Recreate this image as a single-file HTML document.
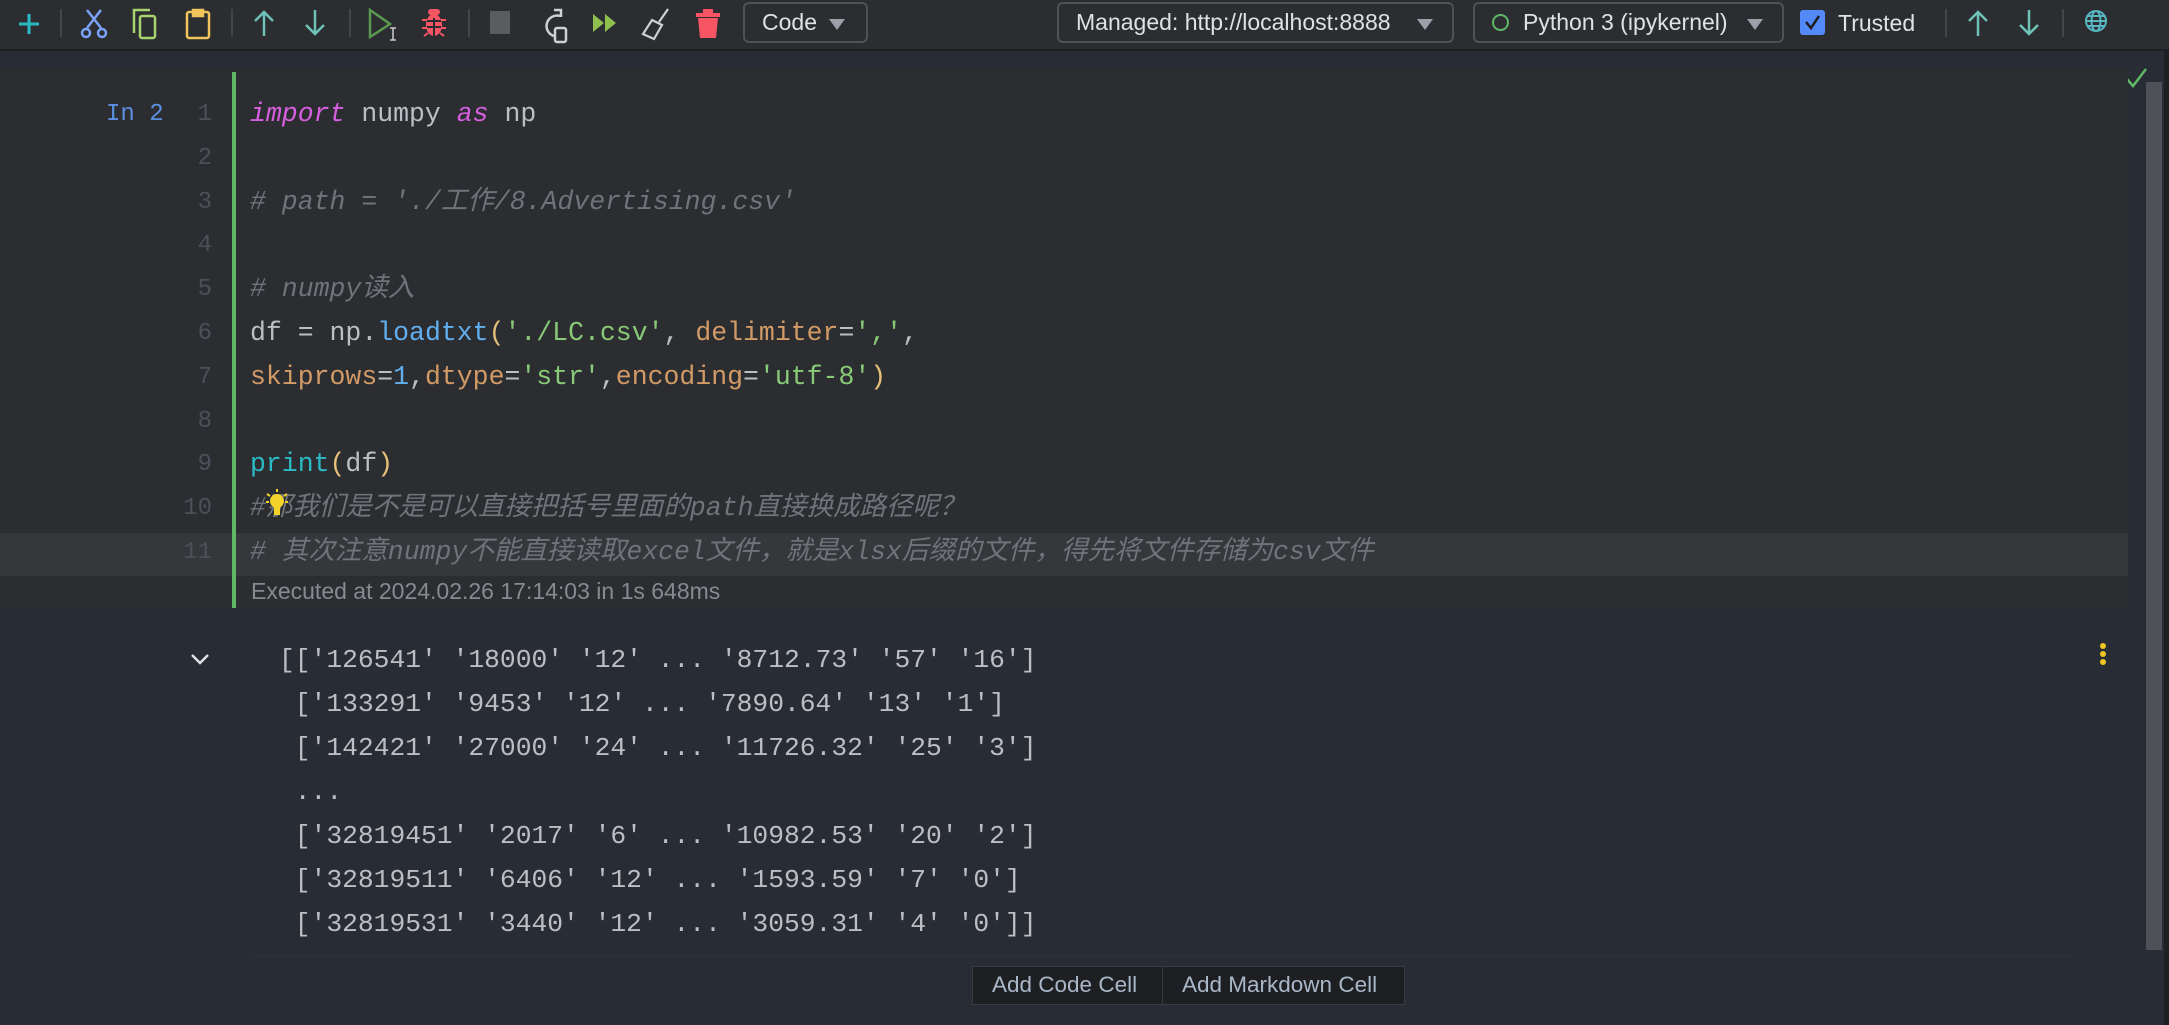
<!DOCTYPE html>
<html><head><meta charset="utf-8"><style>
*{margin:0;padding:0;box-sizing:border-box}
body{width:2169px;height:1025px;background:#282c34;overflow:hidden;position:relative;font-family:"Liberation Sans","Noto Sans CJK SC",sans-serif}
.abs{position:absolute}
#tb{left:0;top:0;width:2169px;height:51px;background:#2b2d30;border-bottom:2px solid #1e1f22}
.sep{position:absolute;top:9px;width:2px;height:28px;background:#43454a}
.ic{position:absolute;top:6px}
.dd{position:absolute;top:2px;height:41px;border:2px solid #4e5157;border-radius:6px;color:#dfe1e5;font-size:23px;line-height:37px;padding-left:17px}
.tri{position:absolute;top:15px;width:0;height:0;border-left:8px solid transparent;border-right:8px solid transparent;border-top:11px solid #9da0a8}
#cell{left:0;top:70px;width:2128px;height:538px;background:#2b2d30}
.code{position:absolute;left:250px;font-family:"Liberation Mono","Noto Sans CJK SC",monospace;font-size:26.5px;line-height:43.8px;color:#bcbec4;white-space:pre}
.ln{position:absolute;left:150px;width:62px;text-align:right;font-family:"Liberation Mono",monospace;font-size:24px;line-height:43.8px;color:#4b5059}
.k{color:#d55fde;font-style:italic}.c{color:#6f737a;font-style:italic}.f{color:#61afef}.s{color:#89ca78}.o{color:#d19a66}.p{color:#e5c07b}.pr{color:#2bbac5}
.out{position:absolute;left:279px;top:638px;font-family:"Liberation Mono",monospace;font-size:26.3px;line-height:44px;color:#bcbec4;white-space:pre}
</style></head><body>
<div id="tb" class="abs">
<svg class="ic" style="left:14px" width="30" height="34" viewBox="0 0 30 34"><path d="M15 8v20M5 18h20" stroke="#2bbac5" stroke-width="3"/></svg>
<div class="sep" style="left:60px"></div>
<svg class="ic" style="left:78px" width="32" height="34" viewBox="0 0 32 34"><g stroke="#7aa2f7" stroke-width="2.5" fill="none"><path d="M9 4l14 18M23 4L9 22"/><circle cx="8" cy="27" r="4"/><circle cx="24" cy="27" r="4"/></g></svg>
<svg class="ic" style="left:130px" width="32" height="34" viewBox="0 0 32 34"><g stroke="#a7d46f" stroke-width="2.5" fill="none"><path d="M4 27V4h16"/><rect x="10" y="10" width="15" height="22" rx="2"/></g></svg>
<svg class="ic" style="left:183px" width="32" height="34" viewBox="0 0 32 34"><g stroke="#f2c55c" stroke-width="2.5" fill="none"><rect x="4" y="6" width="22" height="26" rx="2"/><path d="M10 4h10v6H10z" fill="#f2c55c"/></g></svg>
<div class="sep" style="left:231px"></div>
<svg class="ic" style="left:249px" width="30" height="34" viewBox="0 0 30 34"><path d="M15 30V6M6 15l9-9 9 9" stroke="#6fc2b8" stroke-width="2.5" fill="none"/></svg>
<svg class="ic" style="left:300px" width="30" height="34" viewBox="0 0 30 34"><path d="M15 4v24M6 19l9 9 9-9" stroke="#6fc2b8" stroke-width="2.5" fill="none"/></svg>
<div class="sep" style="left:349px"></div>
<svg class="ic" style="left:366px" width="36" height="36" viewBox="0 0 36 36"><path d="M4 4l20 14L4 31z" stroke="#5a9a50" stroke-width="2.5" fill="none"/><path d="M24 22h6M27 22v12M24 34h6" stroke="#ccc" stroke-width="1.5"/></svg>
<svg class="ic" style="left:419px" width="30" height="34" viewBox="0 0 30 34"><g fill="#f75464"><ellipse cx="15" cy="19" rx="8" ry="11"/><rect x="9" y="3" width="12" height="6" rx="3"/></g><g stroke="#2b2d30" stroke-width="2"><path d="M8 15h14M8 21h14M15 12v18"/></g><path d="M3 14h5M22 14h5M3 22h5M22 22h5M5 30l4-3M25 30l-4-3" stroke="#f75464" stroke-width="2"/></svg>
<div class="sep" style="left:468px"></div>
<div class="abs" style="left:490px;top:11px;width:20px;height:23px;background:#5a5c60"></div>
<svg class="ic" style="left:538px" width="32" height="38" viewBox="0 0 32 38"><g stroke="#ced0d6" stroke-width="2.5" fill="none"><path d="M22 10a10 10 0 1 0-6 20"/><path d="M16 4h7v7"/><rect x="17" y="22" width="11" height="14" rx="2"/></g></svg>
<svg class="ic" style="left:590px" width="30" height="34" viewBox="0 0 30 34"><path d="M3 8l11 9-11 9zM15 8l11 9-11 9z" fill="#8fbf4f"/></svg>
<svg class="ic" style="left:640px" width="34" height="36" viewBox="0 0 34 36"><g stroke="#ced0d6" stroke-width="2.2" fill="none"><path d="M28 3L19 16"/><path d="M12 14l10 5-8 14-11-5z"/></g></svg>
<svg class="ic" style="left:694px" width="28" height="34" viewBox="0 0 28 34"><path d="M9 3h10v4h7v4H2V7h7z" fill="#f75464"/><path d="M4 12h20l-2 20H6z" fill="#f75464"/></svg>
<div class="dd" style="left:743px;width:125px">Code<div class="tri" style="left:84px"></div></div>
<div class="dd" style="left:1057px;width:397px">Managed: http://localhost:8888<div class="tri" style="left:358px"></div></div>
<div class="dd" style="left:1473px;width:311px;padding-left:48px"><div class="abs" style="left:17px;top:10px;width:17px;height:17px;border:2px solid #5fb865;border-radius:50%"></div>Python 3 (ipykernel)<div class="tri" style="left:272px"></div></div>
<div class="abs" style="left:1800px;top:10px;width:25px;height:25px;background:#548af7;border-radius:3px"></div>
<svg class="abs" style="left:1800px;top:10px" width="25" height="25"><path d="M6 12l5 6 8-12" stroke="#1e1f22" stroke-width="2.5" fill="none"/></svg>
<div class="abs" style="left:1838px;top:8px;font-size:23px;color:#dfe1e5;line-height:30px">Trusted</div>
<div class="sep" style="left:1945px"></div>
<svg class="ic" style="left:1963px" width="30" height="34" viewBox="0 0 30 34"><path d="M15 30V6M6 15l9-9 9 9" stroke="#6fc2b8" stroke-width="2.5" fill="none"/></svg>
<svg class="ic" style="left:2014px" width="30" height="34" viewBox="0 0 30 34"><path d="M15 4v24M6 19l9 9 9-9" stroke="#6fc2b8" stroke-width="2.5" fill="none"/></svg>
<div class="sep" style="left:2062px"></div>
<svg class="ic" style="left:2083px;top:8px" width="26" height="26" viewBox="0 0 26 26"><g stroke="#56b6c2" stroke-width="2" fill="none"><circle cx="13" cy="13" r="10"/><ellipse cx="13" cy="13" rx="4.5" ry="10"/><path d="M3 13h20M5 8h16M5 18h16"/></g></svg>
</div>
<svg class="abs" style="left:2124px;top:66px" width="26" height="24"><path d="M3 13l6 7L22 3" stroke="#5fb865" stroke-width="2.5" fill="none"/></svg>
<div id="cell" class="abs"></div>
<div class="abs" style="left:0;top:533px;width:2128px;height:43px;background:#35373b"></div>
<div class="abs" style="left:232px;top:72px;width:4px;height:536px;background:#5fb865"></div>
<div class="abs" style="left:106px;top:93px;font-family:'Liberation Mono',monospace;font-size:24px;line-height:43.8px;color:#5c8fe0">In 2</div>
<div class="ln" style="top:93px">1<br>2<br>3<br>4<br>5<br>6<br>7<br>8<br>9<br>10<br>11</div>
<div class="code" style="top:93px"><span class="k">import</span> numpy <span class="k">as</span> np

<span class="c"># path = './工作/8.Advertising.csv'</span>

<span class="c"># numpy读入</span>
df = np.<span class="f">loadtxt</span><span class="p">(</span><span class="s">'./LC.csv'</span>, <span class="o">delimiter</span>=<span class="s">','</span>,
<span class="o">skiprows</span>=<span class="f">1</span>,<span class="o">dtype</span>=<span class="s">'str'</span>,<span class="o">encoding</span>=<span class="s">'utf-8'</span><span class="p">)</span>

<span class="pr">print</span><span class="p">(</span>df<span class="p">)</span>
<span class="c">#那我们是不是可以直接把括号里面的path直接换成路径呢？</span>
<span class="c"># 其次注意numpy不能直接读取excel文件，就是xlsx后缀的文件，得先将文件存储为csv文件</span></div>
<svg class="abs" style="left:264px;top:487px" width="26" height="34" viewBox="0 0 26 34"><circle cx="13" cy="14" r="7" fill="#f2d32a"/><rect x="10" y="19" width="6" height="9" fill="#f2d32a"/><path d="M13 2v3M3 7l3 2M23 7l-3 2M2 15h3M21 15h3" stroke="#f2d32a" stroke-width="2"/></svg>
<div class="abs" style="left:251px;top:577px;font-size:23px;color:#868a91;line-height:28px">Executed at 2024.02.26 17:14:03 in 1s 648ms</div>
<svg class="abs" style="left:189px;top:650px" width="22" height="18"><path d="M3 5l8 8 8-8" stroke="#dfe1e5" stroke-width="2.5" fill="none"/></svg>
<div class="out">[['126541' '18000' '12' ... '8712.73' '57' '16']
 ['133291' '9453' '12' ... '7890.64' '13' '1']
 ['142421' '27000' '24' ... '11726.32' '25' '3']
 ...
 ['32819451' '2017' '6' ... '10982.53' '20' '2']
 ['32819511' '6406' '12' ... '1593.59' '7' '0']
 ['32819531' '3440' '12' ... '3059.31' '4' '0']]</div>
<div class="abs" style="left:2100px;top:643px;width:6px;height:6px;border-radius:50%;background:#f2c521"></div>
<div class="abs" style="left:2100px;top:651px;width:6px;height:6px;border-radius:50%;background:#f2c521"></div>
<div class="abs" style="left:2100px;top:659px;width:6px;height:6px;border-radius:50%;background:#f2c521"></div>
<div class="abs" style="left:250px;top:956px;width:1823px;height:1px;background:#2e3138"></div>
<div class="abs" style="left:2146px;top:82px;width:16px;height:868px;background:#4e5157"></div>
<div class="abs" style="left:2164px;top:51px;width:5px;height:974px;background:#1e1f22"></div>
<div class="abs" style="left:972px;top:966px;width:433px;height:39px;background:#1e1f22;border:1px solid #393b40;font-size:22.5px;color:#a9b7c9;line-height:36px">
<span class="abs" style="left:19px">Add Code Cell</span>
<div class="abs" style="left:189px;top:0;width:1px;height:37px;background:#393b40"></div>
<span class="abs" style="left:209px">Add Markdown Cell</span></div>
</body></html>
